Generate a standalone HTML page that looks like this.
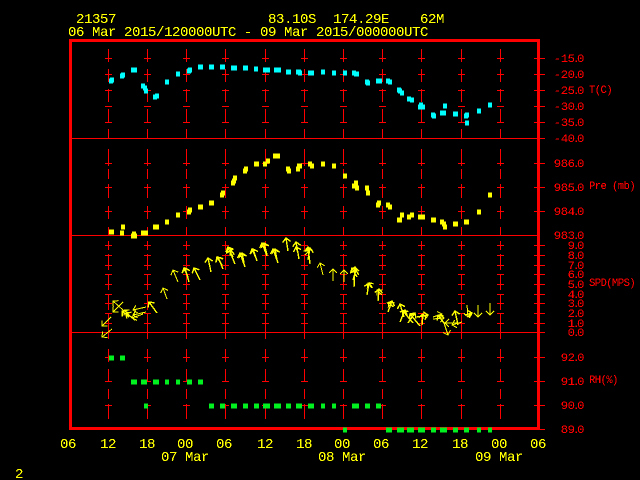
<!DOCTYPE html>
<html><head><meta charset="utf-8"><title>21357</title>
<style>
html,body{margin:0;padding:0;background:#000;width:640px;height:480px;overflow:hidden}
svg{display:block}
text{white-space:pre}
.t{font-family:"Liberation Mono",monospace;font-size:14px;letter-spacing:-.4px;fill:#ff0}
.r{font-family:"Liberation Mono",monospace;font-size:11px;letter-spacing:-.4px;fill:#f00;text-anchor:end}
.l{font-family:"Liberation Mono",monospace;font-size:10.6px;letter-spacing:-.6px;fill:#f00}
</style></head><body>
<svg xmlns="http://www.w3.org/2000/svg" width="640" height="480" viewBox="0 0 640 480">
<defs>
<filter id="a" filterUnits="userSpaceOnUse" x="0" y="0" width="640" height="480" color-interpolation-filters="sRGB"><feComponentTransfer><feFuncA type="linear" slope="20" intercept="-8"/></feComponentTransfer></filter>
<marker id="h" markerUnits="userSpaceOnUse" markerWidth="12" markerHeight="12" refX="6" refY="6" orient="auto" overflow="visible"><path d="M2 2L6 6L2 10" fill="none" stroke="#ff0" stroke-width="1" shape-rendering="crispEdges"/></marker>
<marker id="k" markerUnits="userSpaceOnUse" markerWidth="12" markerHeight="12" refX="6" refY="6" orient="auto" overflow="visible"><path d="M2 2L6 6L2 10" fill="none" stroke="#ff0" stroke-width="1.4" shape-rendering="crispEdges"/></marker>
<g id="c" fill="none" stroke="#f00" stroke-width="1">
<path d="M.5 49V62M.5 69V82M.5 89V102M.5 109V122M.5 129V138M.5 149V166M.5 169V179M.5 184V198M.5 206V219M.5 227V235M.5 241V250M.5 254V270M.5 274V290M.5 294V310M.5 314V332M.5 332V339M.5 349V362M.5 369V382M.5 389V399M.5 404V419"/>
<path d="M-3 58.5H4M-3 74.5H4M-3 90.5H4M-3 106.5H4M-3 122.5H4M-3 163.5H4M-3 187.5H4M-3 211.5H4M-3 245.5H4M-3 255.5H4M-3 265.5H4M-3 274.5H4M-3 284.5H4M-3 294.5H4M-3 303.5H4M-3 313.5H4M-3 323.5H4M-3 357.5H4M-3 381.5H4M-3 405.5H4"/>
</g>
</defs>
<rect width="640" height="480" fill="#000"/>
<g shape-rendering="crispEdges">
<use href="#c" x="108"/><use href="#c" x="147"/><use href="#c" x="186"/><use href="#c" x="225"/><use href="#c" x="265"/><use href="#c" x="304"/><use href="#c" x="343"/><use href="#c" x="382"/><use href="#c" x="421"/><use href="#c" x="461"/><use href="#c" x="500"/>
<path fill="none" stroke="#f00" stroke-width="1" d="M72 138.5H545M72 235.5H538M72 332.5H545M534 58.5H545M534 74.5H545M534 90.5H545M534 106.5H545M534 122.5H545M534 163.5H545M534 187.5H545M534 211.5H545M534 245.5H545M534 255.5H545M534 265.5H545M534 274.5H545M534 284.5H545M534 294.5H545M534 303.5H545M534 313.5H545M534 323.5H545M534 357.5H545M534 381.5H545M534 405.5H545M534 429.5H545"/>
<rect x="70.5" y="40.5" width="468" height="388" fill="none" stroke="#f00" stroke-width="3"/>
<path fill="none" stroke="#0ff" stroke-width="4.6" d="M109 81h4M110 80h4M120 76h4M121 75h4M131 70h4M133 70h4M141 86h4M143 88h4M144 91h4M153 97h4M155 96h4M165 82h4M176 74h4M187 71h4M188 70h4M198 67h5M209 67h5M220 67h5M231 68h6M243 68h5M254 69h4M263 70h7M274 70h7M286 72h5M296 72h5M298 73h4M308 73h6M321 72h4M332 73h4M343 73h4M352 73h4M354 74h5M365 82h4M366 83h4M376 81h6M386 81h4M388 82h4M397 90h4M398 91h4M400 93h4M407 99h4M410 100h4M418 107h5M419 105h4M421 107h4M431 115h4M432 116h4M440 113h6M443 106h4M453 114h5M464 116h4M465 115h4M465 123h4M477 111h4M488 105h4"/>
<path fill="none" stroke="#ff0" stroke-width="4.6" d="M109 232h5M121 227h4M120 233h4M132 234h4M131 236h6M141 233h7M153 227h6M165 222h4M176 215h4M187 212h4M188 210h4M198 207h5M209 203h5M220 195h4M221 193h4M231 183h4M232 181h4M233 178h4M243 171h4M244 169h4M254 164h5M263 164h4M266 161h4M273 156h7M286 169h4M287 171h4M296 169h4M297 166h5M308 164h4M310 166h4M321 164h4M332 166h4M343 176h4M352 186h4M354 183h4M355 188h4M365 188h4M366 193h4M376 205h4M377 203h4M386 205h4M388 207h4M397 220h5M400 215h4M407 217h4M410 215h4M418 217h7M431 220h5M440 222h4M442 224h4M443 227h4M453 224h5M464 222h5M477 212h4M488 195h4"/>
<path fill="none" stroke="#00f020" stroke-width="4.6" d="M109 358h5M120 358h5M131 382h6M141 382h6M153 382h6M165 382h4M176 382h4M187 382h5M198 382h5M144 406h4M209 406h5M220 406h5M231 406h6M243 406h5M254 406h5M263 406h7M274 406h7M286 406h5M296 406h6M308 406h6M321 406h4M332 406h4M352 406h7M365 406h5M376 406h5M343 430h4M386 430h6M397 430h7M407 430h7M418 430h7M431 430h5M440 430h7M453 430h5M464 430h5M477 430h4M488 430h4"/>
<g fill="none" stroke="#ff0" stroke-width="1">
<path d="M111 317L102 326" marker-end="url(#h)"/><path d="M112 329L102 337" marker-end="url(#h)"/>
<path d="M123 310L113 301" marker-end="url(#h)"/><path d="M123 302L113 312" marker-end="url(#h)"/>
<path d="M146 307L133 310" marker-end="url(#h)"/><path d="M146 312L133 315" marker-end="url(#h)"/><path d="M143 314L132 318" marker-end="url(#h)"/>
<path d="M167 299L163 288" marker-end="url(#h)"/><path d="M178 282L173 270" marker-end="url(#h)"/>
<path d="M333 281V269" marker-end="url(#h)"/><path d="M344 282L344 270" marker-end="url(#h)"/>
<path d="M478 305V317" marker-end="url(#h)"/><path d="M490 303V315" marker-end="url(#h)"/><path d="M467 305L468 317" marker-end="url(#h)"/>
<path d="M323 275L320 263" marker-end="url(#h)"/><path d="M433 319L444 318" marker-end="url(#h)"/><path d="M433 317L442 314" marker-end="url(#h)"/>
<path d="M460 323L445 323" marker-end="url(#h)"/><path d="M444 323L448 335" marker-end="url(#h)"/><path d="M462 322L452 325" marker-end="url(#h)"/>
</g>
<g fill="none" stroke="#ff0" stroke-width="1.4">
<path d="M129 317L122 311" marker-end="url(#k)"/><path d="M135 320L126 313" marker-end="url(#k)"/><path d="M132 318L124 310" marker-end="url(#k)"/>
<path d="M157 313L149 302" marker-end="url(#k)"/>
<path d="M189 282L185 268" marker-end="url(#k)"/><path d="M188 277L184 268" marker-end="url(#k)"/><path d="M200 280L194 268" marker-end="url(#k)"/>
<path d="M211 272L208 258" marker-end="url(#k)"/><path d="M223 269L218 257" marker-end="url(#k)"/><path d="M222 265L217 257" marker-end="url(#k)"/>
<path d="M235 264L228 247" marker-end="url(#k)"/><path d="M233 257L228 248" marker-end="url(#k)"/><path d="M230 256L231 250" marker-end="url(#k)"/>
<path d="M245 267L240 253" marker-end="url(#k)"/><path d="M244 263L242 253" marker-end="url(#k)"/>
<path d="M257 261L253 249" marker-end="url(#k)"/><path d="M256 258L252 249" marker-end="url(#k)"/>
<path d="M267 256L262 243" marker-end="url(#k)"/><path d="M267 255L264 243" marker-end="url(#k)"/>
<path d="M278 263L273 249" marker-end="url(#k)"/><path d="M277 260L275 249" marker-end="url(#k)"/>
<path d="M288 251L286 238" marker-end="url(#k)"/><path d="M299 259L296 242" marker-end="url(#k)"/><path d="M298 253L296 247" marker-end="url(#k)"/>
<path d="M310 264L308 247" marker-end="url(#k)"/><path d="M308 260L310 248" marker-end="url(#k)"/><path d="M305 255L309 251" marker-end="url(#k)"/>
<path d="M354 287L355 267" marker-end="url(#k)"/><path d="M357 277L352 268" marker-end="url(#k)"/><path d="M353 280L356 270" marker-end="url(#k)"/>
<path d="M367 295L369 283" marker-end="url(#k)"/><path d="M372 288L368 283" marker-end="url(#k)"/>
<path d="M378 301L379 289" marker-end="url(#k)"/><path d="M382 295L377 290" marker-end="url(#k)"/>
<path d="M388 312L392 301" marker-end="url(#k)"/><path d="M393 307L389 302" marker-end="url(#k)"/>
<path d="M404 317L400 304" marker-end="url(#k)"/><path d="M400 322L405 310" marker-end="url(#k)"/><path d="M413 323L403 311" marker-end="url(#k)"/>
<path d="M408 323L415 313" marker-end="url(#k)"/><path d="M420 326L410 314" marker-end="url(#k)"/><path d="M422 325L423 314" marker-end="url(#k)"/><path d="M417 317L428 315" marker-end="url(#k)"/>
<path d="M444 323L438 315" marker-end="url(#k)"/><path d="M458 325L455 311" marker-end="url(#k)"/><path d="M465 315L472 313" marker-end="url(#k)"/>
</g>
</g>
<g filter="url(#a)">
<text class="t" x="76" y="23">21357</text><text class="t" x="268" y="23">83.10S</text><text class="t" x="333" y="23">174.29E</text><text class="t" x="420" y="23">62M</text>
<text class="t" x="68" y="36">06 Mar 2015/120000UTC - 09 Mar 2015/000000UTC</text>
<text class="t" x="60" y="448">06</text><text class="t" x="100" y="448">12</text><text class="t" x="139" y="448">18</text><text class="t" x="177" y="448">00</text><text class="t" x="216" y="448">06</text><text class="t" x="257" y="448">12</text><text class="t" x="296" y="448">18</text><text class="t" x="334" y="448">00</text><text class="t" x="373" y="448">06</text><text class="t" x="412" y="448">12</text><text class="t" x="452" y="448">18</text><text class="t" x="491" y="448">00</text><text class="t" x="530" y="448">06</text>
<text class="t" x="161" y="461">07 Mar</text><text class="t" x="318" y="461">08 Mar</text><text class="t" x="475" y="461">09 Mar</text>
<text class="t" x="15" y="478">2</text>
<g transform="translate(584,0) scale(1.12,1)">
<text class="r" x="0" y="62" dx="0 0 0 -2 -2">-15.0</text><text class="r" x="0" y="78" dx="0 0 0 -2 -2">-20.0</text><text class="r" x="0" y="94" dx="0 0 0 -2 -2">-25.0</text><text class="r" x="0" y="110" dx="0 0 0 -2 -2">-30.0</text><text class="r" x="0" y="126" dx="0 0 0 -2 -2">-35.0</text><text class="r" x="0" y="142" dx="0 0 0 -2 -2">-40.0</text>
<text class="r" x="0" y="167" dx="0 0 0 -2 -2">986.0</text><text class="r" x="0" y="191" dx="0 0 0 -2 -2">985.0</text><text class="r" x="0" y="215" dx="0 0 0 -2 -2">984.0</text><text class="r" x="0" y="239" dx="0 0 0 -2 -2">983.0</text>
<text class="r" x="0" y="249" dx="0 -2 -2">9.0</text><text class="r" x="0" y="259" dx="0 -2 -2">8.0</text><text class="r" x="0" y="269" dx="0 -2 -2">7.0</text><text class="r" x="0" y="278" dx="0 -2 -2">6.0</text><text class="r" x="0" y="288" dx="0 -2 -2">5.0</text><text class="r" x="0" y="298" dx="0 -2 -2">4.0</text><text class="r" x="0" y="307" dx="0 -2 -2">3.0</text><text class="r" x="0" y="317" dx="0 -2 -2">2.0</text><text class="r" x="0" y="327" dx="0 -2 -2">1.0</text><text class="r" x="0" y="336" dx="0 -2 -2">0.0</text>
<text class="r" x="0" y="361" dx="0 0 -2 -2">92.0</text><text class="r" x="0" y="385" dx="0 0 -2 -2">91.0</text><text class="r" x="0" y="409" dx="0 0 -2 -2">90.0</text><text class="r" x="0" y="433" dx="0 0 -2 -2">89.0</text>
</g>
<text class="l" x="589" y="93">T(C)</text><text class="l" x="589" y="189">Pre (mb)</text><text class="l" x="589" y="286">SPD(MPS)</text><text class="l" x="589" y="383">RH(%)</text>
</g>
</svg>
</body></html>
